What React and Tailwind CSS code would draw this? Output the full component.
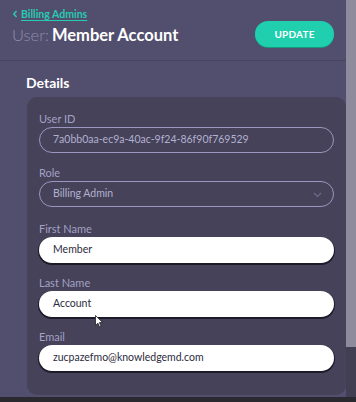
import React from "react";

const font = { fontFamily: "Lato, 'Noto Sans', sans-serif" };

function Field({ label, value, variant = "outline", select = false, last = false }) {
  return (
    <div className={last ? "" : "mb-[13px]"}>
      <div className="h-[14px] text-[11px] leading-[14px] text-[#a4a1c4] mb-[1px]">{label}</div>
      {variant === "outline" ? (
        <div className="relative h-[26px] rounded-full border border-[#9a97c0] flex items-center pl-[13px] text-[10.5px] text-[#b3b1cf]">
          {value}
          {select && (
            <svg className="absolute right-[11px] top-[10px]" width="9" height="6" viewBox="0 0 9 6" fill="none">
              <path d="M1 1l3.5 3.5L8 1" stroke="#6f6c90" strokeWidth="1.1" />
            </svg>
          )}
        </div>
      ) : (
        <div className="h-[26px] rounded-full bg-white shadow-[0_1px_0_1px_#1d1b29] flex items-center pl-[14px] text-[10.5px] text-[#2d2b3d]">
          {value}
        </div>
      )}
    </div>
  );
}

export default function App() {
  return (
    <div className="w-[356px] h-[402px] flex flex-col overflow-hidden bg-[#2a2930]" style={font}>
      <div className="flex flex-1 min-h-0">
        <div className="w-[346px] bg-[#524e6e] flex flex-col">
          <div className="h-[61px] border-b border-[#48445f] flex items-start justify-between pl-[12px] pr-[12px]">
            <div className="pt-[7px]">
              <div className="flex items-center gap-[3px] text-[10.5px] font-bold text-[#27cbb0] leading-[14px]">
                <svg width="6" height="8" viewBox="0 0 6 8" fill="none">
                  <path d="M4.5 1L1.8 4l2.7 3" stroke="#27cbb0" strokeWidth="1.5" />
                </svg>
                <span className="underline underline-offset-[2px]">Billing Admins</span>
              </div>
              <div className="mt-[3px] text-[16.5px] leading-[22px] whitespace-nowrap">
                <span className="text-[#8f8cad] font-light">User:</span>
                <span className="text-white font-bold ml-[3px]">Member Account</span>
              </div>
            </div>
            <button className="mt-[21px] w-[79px] h-[26px] rounded-full bg-[#1fcfae] shadow-[0_1px_0_#18977f] text-white text-[10px] font-bold tracking-[0.2px]">
              UPDATE
            </button>
          </div>
          <div className="pl-[26px] pt-[12px] text-white text-[14px] font-bold leading-[20px]">Details</div>
          <div className="ml-[27px] mt-[4px] rounded-[10px] bg-[#45425a] px-[12px] pt-[15px] pb-[24px] relative">
            <Field label="User ID" value="7a0bb0aa-ec9a-40ac-9f24-86f90f769529" />
            <Field label="Role" value="Billing Admin" select />
            <div className="pt-[2px]">
              <Field label="First Name" value="Member" variant="white" />
            </div>
            <Field label="Last Name" value="Account" variant="white" />
            <Field label="Email" value="zucpazefmo@knowledgemd.com" variant="white" last />
            <svg className="absolute left-[68px] top-[218px]" width="9" height="13" viewBox="0 0 9 13">
              <path d="M0.5 0.5v10l2.4-2.3 1.7 3.8 1.5-.7-1.7-3.7h3.3z" fill="#fff" stroke="#222" strokeWidth="0.8" />
            </svg>
          </div>
        </div>
        <div className="w-[10px] flex flex-col bg-[#423f52]">
          <div className="h-[347px] bg-[#8e8c9c]" />
        </div>
      </div>
      <div className="h-[5px] bg-[#2a2930]" />
    </div>
  );
}
